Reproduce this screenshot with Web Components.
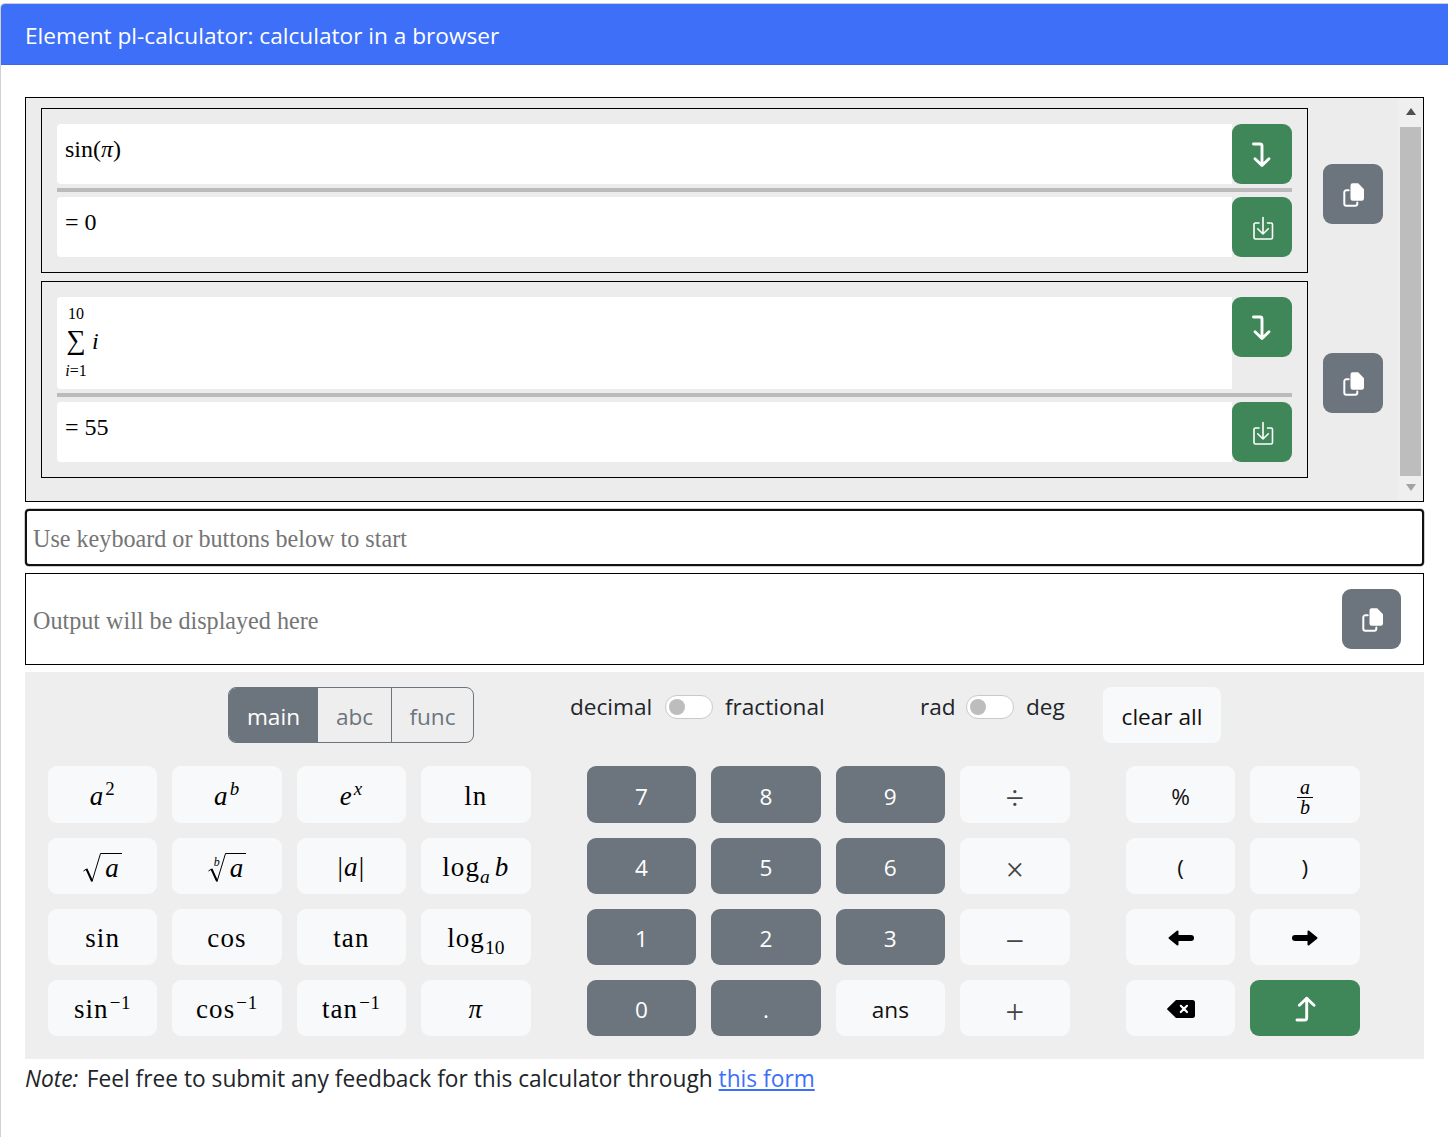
<!DOCTYPE html>
<html lang="en">
<head>
<meta charset="utf-8">
<title>pl-calculator</title>
<style>
    html, body { margin: 0; height: 100%; overflow: hidden; background: #fff; }
    body { font-family: "Open Sans", sans-serif; color: #212529; }
</style>
</head>
<body>
<calc-card heading="Element pl-calculator: calculator in a browser">
    <calc-history>
        <history-item>
            <span slot="input">sin(<m-i>π</m-i>)</span>
            <span slot="output">= 0</span>
        </history-item>
        <history-item>
            <m-sum slot="input"></m-sum>
            <span slot="output">= 55</span>
        </history-item>
    </calc-history>
    <calc-input placeholder="Use keyboard or buttons below to start"></calc-input>
    <calc-output placeholder="Output will be displayed here"></calc-output>
    <calc-keypad>
        <key-group slot="keys" cols="4">
            <calc-key math><m-i>a</m-i><m-sup>2</m-sup></calc-key>
            <calc-key math><m-i>a</m-i><m-sup><m-i>b</m-i></m-sup></calc-key>
            <calc-key math><m-i>e</m-i><m-sup><m-i>x</m-i></m-sup></calc-key>
            <calc-key math>ln</calc-key>
            <calc-key math><m-root><m-i>a</m-i></m-root></calc-key>
            <calc-key math><m-root index="b"><m-i>a</m-i></m-root></calc-key>
            <calc-key math>|<m-i>a</m-i>|</calc-key>
            <calc-key math>log<m-sub spaced><m-i>a</m-i></m-sub><m-i>b</m-i></calc-key>
            <calc-key math>sin</calc-key>
            <calc-key math>cos</calc-key>
            <calc-key math>tan</calc-key>
            <calc-key math>log<m-sub>10</m-sub></calc-key>
            <calc-key math>sin<m-sup>−1</m-sup></calc-key>
            <calc-key math>cos<m-sup>−1</m-sup></calc-key>
            <calc-key math>tan<m-sup>−1</m-sup></calc-key>
            <calc-key math><m-i>π</m-i></calc-key>
        </key-group>
        <key-group slot="keys" cols="4">
            <calc-key dark>7</calc-key>
            <calc-key dark>8</calc-key>
            <calc-key dark>9</calc-key>
            <calc-key op>÷</calc-key>
            <calc-key dark>4</calc-key>
            <calc-key dark>5</calc-key>
            <calc-key dark>6</calc-key>
            <calc-key op>×</calc-key>
            <calc-key dark>1</calc-key>
            <calc-key dark>2</calc-key>
            <calc-key dark>3</calc-key>
            <calc-key op>−</calc-key>
            <calc-key dark>0</calc-key>
            <calc-key dark>.</calc-key>
            <calc-key>ans</calc-key>
            <calc-key op>+</calc-key>
        </key-group>
        <key-group slot="keys" cols="2">
            <calc-key>%</calc-key>
            <calc-key math><m-frac top="a" bottom="b"></m-frac></calc-key>
            <calc-key>(</calc-key>
            <calc-key>)</calc-key>
            <calc-key icon><calc-icon name="left"></calc-icon></calc-key>
            <calc-key icon><calc-icon name="right"></calc-icon></calc-key>
            <calc-key icon><calc-icon name="backspace"></calc-icon></calc-key>
            <calc-key icon green><calc-icon name="bent-up"></calc-icon></calc-key>
        </key-group>
    </calc-keypad>
    <calc-note>
        <em>Note:</em> Feel free to submit any feedback for this calculator through <a href="#">this form</a>
    </calc-note>
</calc-card>

<script>
    const ICONS = {
        'bent-down': '<svg width="30" height="30" viewBox="-15 -15 30 30" fill="none" stroke="#fff" stroke-width="2.9" stroke-linecap="round" stroke-linejoin="round"><path d="M-8.5-10H-2a2 2 0 0 1 2 2V11.5M-7 4.8 0 11.5 7 4.8"/></svg>',
        'save': '<svg width="30" height="30" viewBox="-15 -15 30 30" fill="none" stroke="#fff" stroke-width="1.6" stroke-linecap="round" stroke-linejoin="round"><path d="M-3-4H-6.5A1.5 1.5 0 0 0-8-2.500V10.500A1.500 1.500 0 0 0-6.500 12H9A1.500 1.500 0 0 0 10.500 10.500V-2.500A1.500 1.500 0 0 0 9-4H5.500"/><path d="M1-9.500V7M-4.300 1.800 1 7 6.300 1.800"/></svg>',
        'copy': '<svg width="30" height="30" viewBox="-15 -15 30 30"><path fill="#fff" d="M-2.500-8.500A2.200 2.200 0 0 1-.3-10.700H5.200L11-4.800V4.500A2.200 2.200 0 0 1 8.800 6.700H-.3A2.200 2.200 0 0 1-2.500 4.500Z"/><path fill="none" stroke="#fff" stroke-width="2" stroke-linecap="round" d="M-4.300-3.700H-6.700A2 2 0 0 0-8.700-1.700V9.700A2 2 0 0 0-6.700 11.700H2.300A2 2 0 0 0 4.300 9.700V8.500"/></svg>',
        'left': '<svg width="26" height="16" viewBox="0 0 26 16"><path d="M1.500 8 9.500 1.500V14.500Z" fill="#000" stroke="#000" stroke-width="2" stroke-linejoin="round"/><path d="M9 8H23" stroke="#000" stroke-width="6" stroke-linecap="round"/></svg>',
        'right': '<svg width="26" height="16" viewBox="0 0 26 16"><path d="M24.500 8 16.500 1.500V14.500Z" fill="#000" stroke="#000" stroke-width="2" stroke-linejoin="round"/><path d="M3 8H17" stroke="#000" stroke-width="6" stroke-linecap="round"/></svg>',
        'backspace': '<svg width="28" height="18" viewBox="0 0 28 18"><path fill="#000" d="M9 0H25.500A2.500 2.500 0 0 1 28 2.500V15.500A2.500 2.500 0 0 1 25.500 18H9L.5 9.800A1.100 1.100 0 0 1 .5 8.200Z"/><path stroke="#fff" stroke-width="2.200" stroke-linecap="round" d="M13.800 5.800 20 12M20 5.800 13.800 12"/></svg>',
        'bent-up': '<svg width="30" height="30" viewBox="-15 -15 30 30" fill="none" stroke="#fff" stroke-width="2.900" stroke-linecap="round" stroke-linejoin="round"><path d="M-8 12H-.3A2 2 0 0 0 1.700 10V-9.700M-5.600-2.800 1.700-9.700 9-2.800"/></svg>'
    };

    // shorthand so every element below stays a class with an open root
    function define(name, html, setup) {
        const template = document.createElement('template');
        // whitespace between tags would render as a space in inline hosts
        template.innerHTML = html.trim().replace(/>\s+</g, '><');
        customElements.define(name, class extends HTMLElement {
            constructor() {
                super();
                const shadow = this.attachShadow({ mode: 'open' });
                shadow.append(template.content.cloneNode(true));
            }
            connectedCallback() {
                if (setup) setup(this, this.shadowRoot);
            }
        });
    }

    define('calc-card', `
<style>
    :host { display: block; padding-top: 3px; }
    .card { border: 1px solid #d0d0d0; border-right: 0; border-bottom: 0; border-radius: 5px 0 0 0; height: 1134px; box-sizing: border-box; }
    header { height: 60px; line-height: 63px; background: #3e6ff9; border-bottom: 1px solid #3a68e8; border-radius: 4px 0 0 0; color: #fff; padding-left: 24px; font-size: 22.65px; }
    .body { padding: 32px 24px 0; display: flex; flex-direction: column; gap: 7px; }
</style>
<div class="card">
    <header></header>
    <div class="body"><slot></slot></div>
</div>`, (el, root) => {
        root.querySelector('header').textContent = el.getAttribute('heading');
    });

    define('calc-history', `
<style>
    :host { display: flex; height: 405px; box-sizing: border-box; border: 1px solid #000; background: #ececec; overflow: hidden; }
    .list { flex: 1; padding: 10px 0 0 15px; display: flex; flex-direction: column; gap: 8px; }
    .bar { width: 25px; display: flex; flex-direction: column; align-items: center; background: #efefef; }
    .up { border: 5.500px solid transparent; border-top: 0; border-bottom: 7px solid #505050; margin-top: 10px; }
    .thumb { width: 21px; height: 349px; background: #bdbdbd; margin-top: 12px; }
    .down { border: 5.500px solid transparent; border-bottom: 0; border-top: 7px solid #a3a3a3; margin-top: 8px; }
</style>
<div class="list"><slot></slot></div>
<div class="bar"><div class="up"></div><div class="thumb"></div><div class="down"></div></div>`);

    define('history-item', `
<style>
    :host { display: flex; align-items: center; gap: 15px; }
    .box { width: 1235px; border: 1px solid #000; padding: 15px; display: flex; flex-direction: column; }
    .row { display: flex; align-items: flex-start; }
    .math { flex: 1; min-height: 60px; background: #fff; border-radius: 4px 0 0 4px; padding: 7px 8px 6px; box-sizing: border-box; font: 24px/36px "Liberation Serif", serif; color: #000; }
    hr { height: 4px; margin: 4px 0 5px; border: 0; background: #bbb; }
    .copy { margin-top: 7px; }
</style>
<div class="box">
    <div class="row in"><div class="math"><slot name="input"></slot></div><icon-button color="#3f8759" icon="bent-down"></icon-button></div>
    <hr>
    <div class="row"><div class="math"><slot name="output"></slot></div><icon-button color="#3f8759" icon="save"></icon-button></div>
</div>
<icon-button class="copy" color="#6c757d" icon="copy"></icon-button>`);

    define('icon-button', `
<style>
    :host { display: flex; flex: none; width: 60px; height: 60px; border-radius: 9px; align-items: center; justify-content: center; }
</style>
<calc-icon></calc-icon>`, (el, root) => {
        el.style.background = el.getAttribute('color');
        root.querySelector('calc-icon').setAttribute('name', el.getAttribute('icon'));
    });

    class CalcIcon extends HTMLElement {
        constructor() {
            super();
            this.attachShadow({ mode: 'open' }).innerHTML = '<style>:host { display: inline-flex; } svg { display: block; }</style><span></span>';
        }
        // only then attributeChangedCallback is called for given attributes
        static get observedAttributes() {
            return ['name'];
        }
        attributeChangedCallback(name, oldValue, newValue) {
            this.shadowRoot.querySelector('span').innerHTML = ICONS[newValue] || '';
        }
    }
    customElements.define('calc-icon', CalcIcon);

    define('calc-input', `
<style>
    :host { display: block; height: 57px; box-sizing: border-box; border: 2.500px solid #111; border-radius: 4px; background: #fff; box-shadow: 0 0 0 .5px #999; padding: 8px 6px 0; font: 24.130px/40px "Liberation Serif", serif; color: #757575; }
</style>
<span></span>`, (el, root) => {
        root.querySelector('span').textContent = el.getAttribute('placeholder');
    });

    define('calc-output', `
<style>
    :host { display: flex; align-items: center; justify-content: space-between; height: 92px; box-sizing: border-box; border: 1px solid #000; background: #fff; padding: 0 22px 0 7px; font: 24.130px "Liberation Serif", serif; color: #757575; }
    .text { padding-top: 4px; }
    icon-button { width: 59px; }
</style>
<span class="text"></span><icon-button color="#6c757d" icon="copy"></icon-button>`, (el, root) => {
        root.querySelector('.text').textContent = el.getAttribute('placeholder');
    });

    define('calc-keypad', `
<style>
    :host { display: block; height: 387px; box-sizing: border-box; background: #eee; padding: 15px 0 23px 22.800px; }
    .controls { display: flex; height: 56px; padding-left: 180.200px; }
    .seg { display: flex; width: 246px; box-sizing: border-box; border: 1px solid #6c757d; border-radius: 8px; overflow: hidden; font-size: 22.600px; color: #6c757d; }
    .seg div { display: flex; align-items: center; justify-content: center; padding-top: 2px; box-sizing: border-box; }
    .seg .main { width: 89px; background: #6c757d; color: #fff; }
    .seg .abc { width: 74px; border-right: 1.500px solid #6c757d; }
    .seg .func { flex: 1; }
    .opt { display: flex; flex: none; align-items: center; height: 40px; font-size: 22.600px; line-height: 38px; }
    .opt span { flex: none; }
    .opt span:last-child { margin-left: 12px; }
    .a { margin-left: 96px; width: 253px; }
    .a span:first-child { width: 95px; }
    .b { margin-left: 97px; width: 147px; }
    .b span:first-child { width: 46px; }
    .clear { margin-left: 36px; width: 118px; border-radius: 8px; background: #f8f9fa; display: flex; align-items: center; justify-content: center; font-size: 22.600px; padding-top: 2px; box-sizing: border-box; color: #111; }
    .keys { display: flex; gap: 56.200px; margin-top: 23px; }
</style>
<div class="controls">
    <div class="seg"><div class="main">main</div><div class="abc">abc</div><div class="func">func</div></div>
    <div class="opt a"><span>decimal</span><calc-toggle></calc-toggle><span>fractional</span></div>
    <div class="opt b"><span>rad</span><calc-toggle></calc-toggle><span>deg</span></div>
    <div class="clear">clear all</div>
</div>
<div class="keys"><slot name="keys"></slot></div>`);

    define('calc-toggle', `
<style>
    :host { display: block; flex: none; width: 48px; height: 24px; box-sizing: border-box; border: 1px solid #c9c9c9; border-radius: 12px; background: #fff; padding: 3px 0 0 3px; }
    div { width: 16px; height: 16px; border-radius: 50%; background: #bdbdbd; }
</style>
<div></div>`);

    define('key-group', `
<style>
    :host { display: grid; grid-template-rows: 57px 56px 56px 56px; gap: 15px 14.800px; }
</style>
<slot></slot>`, (el) => {
        el.style.gridTemplateColumns = `repeat(${el.getAttribute('cols')}, 109.600px)`;
    });

    define('calc-key', `
<style>
    :host { display: flex; align-items: center; justify-content: center; border-radius: 9px; background: #f8f9fa; color: #111; font-size: 22.600px; white-space: pre; }
    :host([dark]) { background: #6c757d; color: #fff; }
    :host([green]) { background: #3f8759; }
    :host([math]) { font: 27px "Liberation Serif", serif; letter-spacing: .04em; color: #000; }
    :host([op]) { font: 33px "Liberation Serif", serif; color: #444; }
    span { padding-top: 3px; display: inline-flex; align-items: baseline; }
    :host([op]) span { padding-top: 8px; }
    :host([icon]) span { padding-top: 2px; }
    :host([green]) span { padding-top: 0; }
</style>
<span><slot></slot></span>`);

    define('m-i', `
<style>
    :host { font-family: "Liberation Serif", serif; font-style: italic; }
</style>
<slot></slot>`);

    define('m-sup', `
<style>
    :host { font-size: .7em; position: relative; top: -.48em; margin-left: 1px; letter-spacing: .04em; }
</style>
<slot></slot>`);

    define('m-sub', `
<style>
    :host { font-size: .72em; position: relative; top: .35em; letter-spacing: 0; }
    :host([spaced]) { margin-right: 5px; }
</style>
<slot></slot>`);

    define('m-root', `
<style>
    :host { display: inline-flex; align-items: flex-start; position: relative; }
    svg { display: block; }
    .inner { border-top: 1px solid #000; line-height: 28px; height: 28px; padding: 0 2px 0 4px; }
    .index { position: absolute; font: italic 12px "Liberation Serif", serif; left: 6px; top: 2px; letter-spacing: 0; }
</style>
<svg width="18" height="30" viewBox="0 0 18 30" fill="none" stroke="#000"><path d="M.5 18 3.500 16 9 28.500 17.500 .5H18" stroke-width="1"/><path d="M3.500 16 9 28" stroke-width="2"/></svg><div class="inner"><slot></slot></div><span class="index"></span>`, (el, root) => {
        const index = root.querySelector('.index');
        index.textContent = el.getAttribute('index') || '';
    });

    define('m-frac', `
<style>
    :host { display: inline-flex; flex-direction: column; align-items: center; font: italic 20px/18px "Liberation Serif", serif; padding-top: 2px; letter-spacing: 0; }
    .top { border-bottom: 1px solid #000; padding-bottom: 1px; width: 16px; text-align: center; }
</style>
<div class="top"></div><div class="bottom"></div>`, (el, root) => {
        root.querySelector('.top').textContent = el.getAttribute('top');
        root.querySelector('.bottom').textContent = el.getAttribute('bottom');
    });

    define('m-sum', `
<style>
    :host { display: grid; grid-template-columns: 24px auto; column-gap: 3px; height: 79px; margin: 0 0 0 -1px; padding-top: 1px; box-sizing: border-box; width: 60px; color: #000; font-family: "Liberation Serif", serif; justify-items: center; align-items: center; align-content: start; }
    .top { font-size: 16px; line-height: 18px; }
    .sym { font-size: 27px; line-height: 38px; height: 38px; margin-top: -2px; }
    .bot { font-size: 16px; line-height: 18px; margin-top: 3px; white-space: nowrap; }
    .var { font-size: 24px; line-height: 36px; font-style: italic; justify-self: start; margin: 0 0 0 1px; }
</style>
<div class="top">10</div><div></div>
<div class="sym">∑</div><div class="var">i</div>
<div class="bot"><i>i</i>=1</div>`);

    define('calc-note', `
<style>
    :host { display: block; margin-top: -5px; font-size: 22.720px; line-height: 36px; white-space: nowrap; }
    ::slotted(em) { margin-right: 2.500px; }
    ::slotted(a) { color: #3e6ff9; }
</style>
<slot></slot>`);
</script>
</body>
</html>
